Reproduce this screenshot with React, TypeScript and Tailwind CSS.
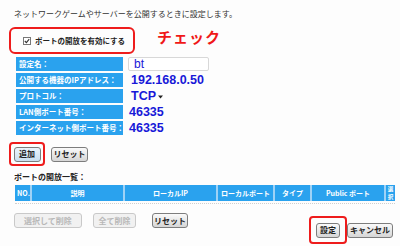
import React from 'react';

const jp = { fontFamily: '"Noto Sans CJK JP", "Liberation Sans", sans-serif' };
const latin = { fontFamily: '"Liberation Sans", Arial, sans-serif' };

const rows = [
  { label: '設定名：', value: 'bt', kind: 'input' },
  { label: '公開する機器のIPアドレス：', value: '192.168.0.50', kind: 'text' },
  { label: 'プロトコル：', value: 'TCP', kind: 'select' },
  { label: 'LAN側ポート番号：', value: '46335', kind: 'text' },
  { label: 'インターネット側ポート番号：', value: '46335', kind: 'text' },
];

const cols = [
  { name: 'NO.', w: 'w-[17px]', align: 'justify-start pl-[2px]' },
  { name: '説明', w: 'w-[93px]', align: 'justify-center' },
  { name: 'ローカルIP', w: 'w-[93px]', align: 'justify-center' },
  { name: 'ローカルポート', w: 'w-[57px]', align: 'justify-start pl-[3px]' },
  { name: 'タイプ', w: 'w-[37px]', align: 'justify-center' },
  { name: 'Public ポート', w: 'w-[74px]', align: 'justify-center' },
];

function Btn({ children, disabled, className = '' }: { children: React.ReactNode; disabled?: boolean; className?: string }) {
  return (
    <div
      style={jp}
      className={`flex items-center justify-center h-[15px] rounded-[3px] border text-[8px] font-bold leading-none ${
        disabled
          ? 'border-[#c9c9c9] bg-[#f1f1f1] text-[#b8b8b8]'
          : 'border-[#7d7d7d] bg-gradient-to-b from-[#fafafa] to-[#d6d6d6] text-[#222]'
      } ${className}`}
    >
      {children}
    </div>
  );
}

export default function App() {
  return (
    <div className="w-[400px] h-[246px] bg-[#fdfdfd] overflow-hidden flex flex-col relative">
      <div style={jp} className="pl-[14px] pt-[9px] text-[8px] leading-[10px] text-[#333]">
        ネットワークゲームやサーバーを公開するときに設定します。
      </div>

      <div className="flex items-center mt-[8px]">
        <div className="ml-[9px] w-[126px] h-[27px] border-[2.5px] border-[#ee1c1c] rounded-[6px] flex items-center pl-[12px] gap-[4px]">
          <div className="w-[8px] h-[8px] border border-[#777] bg-white flex items-center justify-center">
            <svg width="6" height="6" viewBox="0 0 6 6">
              <path d="M0.8 3 L2.4 4.6 L5.2 1.2" stroke="#333" strokeWidth="1.1" fill="none" />
            </svg>
          </div>
          <span style={jp} className="text-[7.5px] font-bold text-[#222] leading-none">
            ポートの開放を有効にする
          </span>
        </div>
        <span style={jp} className="ml-[22px] -mt-[8px] text-[15px] font-bold text-[#f01818] tracking-[1px] leading-none">
          チェック
        </span>
      </div>

      <div className="flex flex-col gap-[2px] mt-[3px] pl-[16px]">
        {rows.map((r) => (
          <div key={r.label} className="flex items-center h-[14px]">
            <div
              style={jp}
              className="w-[107px] h-full bg-[#2aa2ee] text-white text-[7.5px] font-bold leading-none flex items-center pl-[3px] whitespace-nowrap overflow-hidden"
            >
              {r.label}
            </div>
            {r.kind === 'input' && (
              <div
                style={latin}
                className="ml-[5px] w-[81px] h-[14px] border border-[#d8d8d8] rounded-[2px] bg-white text-[12px] text-[#1818d8] leading-none flex items-center pl-[5px]"
              >
                {r.value}
              </div>
            )}
            {r.kind === 'text' && (
              <div style={latin} className={`${r.value === '46335' ? 'ml-[6px]' : 'ml-[8px]'} text-[12.5px] font-bold text-[#1818d8] leading-none`}>
                {r.value}
              </div>
            )}
            {r.kind === 'select' && (
              <div className="ml-[8px] flex items-center gap-[1px]">
                <span style={latin} className="text-[12.5px] font-bold text-[#1818d8] leading-none">
                  {r.value}
                </span>
                <svg width="7" height="7" viewBox="0 0 7 7">
                  <path d="M1 2.5 L6 2.5 L3.5 5.5 Z" fill="#222" />
                </svg>
              </div>
            )}
          </div>
        ))}
      </div>

      <div className="flex items-center mt-[7px] pl-[9px]">
        <div className="w-[36px] h-[24px] border-[2.5px] border-[#ee1c1c] rounded-[4px] flex items-center justify-center">
          <Btn className="w-[27px] border-[#3a8fd0] !from-[#eaf4fc] !to-[#c9dff0]">追加</Btn>
        </div>
        <Btn className="ml-[6px] w-[37px]">リセット</Btn>
      </div>

      <div style={jp} className="pl-[14px] mt-[6px] text-[8px] font-bold text-[#222] leading-[10px]">
        ポートの開放一覧：
      </div>

      <div className="ml-[15px] mt-[3px] w-[380px] h-[17px] bg-[#2aa2ee] flex">
        {cols.map((c) => (
          <div
            key={c.name}
            style={jp}
            className={`${c.w} h-full border-r-[2px] border-[#9fd2f6] flex items-center ${c.align} text-white text-[7px] font-bold leading-none whitespace-nowrap`}
          >
            {c.name}
          </div>
        ))}
        <div style={jp} className="flex-1 flex flex-col items-center justify-center text-white text-[5.5px] font-bold leading-[8px]">
          <span className="block h-[8px]">選</span>
          <span className="block h-[8px]">択</span>
        </div>
      </div>
      <div className="ml-[15px] mt-[2px] w-[380px] border-t border-dotted border-[#cfcfcf]" />

      <div className="flex items-center mt-[9px] pl-[14px]">
        <Btn disabled className="w-[68px]">選択して削除</Btn>
        <Btn disabled className="ml-[11px] w-[43px]">全て削除</Btn>
        <Btn className="ml-[16px] w-[36px]">リセット</Btn>
      </div>

      <div className="flex items-center justify-end pr-[7px] -mt-[12px]">
        <div className="w-[38px] h-[28px] border-[2.5px] border-[#ee1c1c] rounded-[4px] flex items-center justify-center">
          <Btn className="w-[24px]">設定</Btn>
        </div>
        <Btn className="w-[46px]">キャンセル</Btn>
      </div>

      <div className="mt-auto mb-[2px] h-px bg-[#e4e4e4]" />
    </div>
  );
}
